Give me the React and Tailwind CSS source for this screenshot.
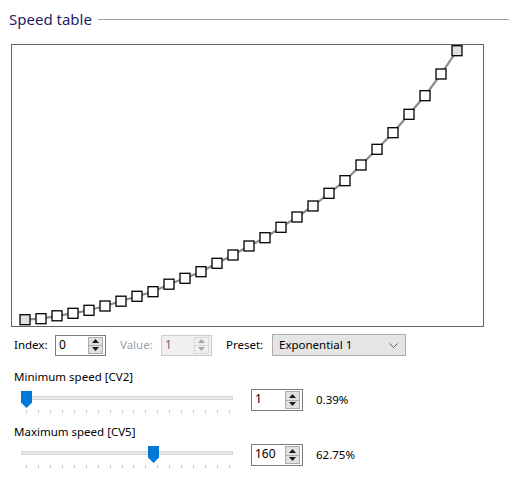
import React from 'react'

const ys = [
  319.7, 318.7, 315.8, 313.3, 310.3, 306, 301.2, 296.3, 291.7, 284.2, 278.3, 271.7, 263.3, 255,
  246, 237.7, 227.3, 217, 206, 193.3, 180.7, 165, 149.3, 132.7, 114.3, 95.7, 74, 50.7,
]

// chart content starts at (12, 45) in page coordinates
const points = ys.map((y, i) => [25 + i * 16 - 12, y - 45])

const SpeedChart = () => {
  const line = points.map(([x, y]) => `${x},${y}`).join(' ')
  return (
    <div className="ml-[11px] mt-[15px] w-[473px] h-[283px] border border-[#646464] bg-white">
      <svg width="471" height="281" viewBox="0 0 471 281">
        <polyline points={line} fill="none" stroke="#8c8c8c" strokeWidth="2.2" />
        {points.map(([x, y], i) => (
          <rect
            key={i}
            x={x - 5}
            y={y - 5}
            width="10"
            height="10"
            fill={i === 0 || i === points.length - 1 ? '#e0e0e0' : '#ffffff'}
            stroke="#000000"
            strokeWidth="1.3"
          />
        ))}
      </svg>
    </div>
  )
}

const SpinBox = ({ value, disabled, width = 'w-[52px]', height = 'h-[22px]' }) => {
  const arrow = disabled ? '#a8a8a8' : '#1a1a1a'
  return (
    <div
      className={`${width} ${height} flex items-stretch border ${
        disabled ? 'border-[#cccccc] bg-[#f0f0f0] text-[#6d6d6d]' : 'border-[#7a7a7a] bg-white text-black'
      }`}
    >
      <div className="flex-1 pl-[3px] text-[12px] leading-[18px]">{value}</div>
      <div className="w-[15px] my-[1px] mr-[2px] flex flex-col">
        <div
          className={`flex-1 flex items-center justify-center border ${
            disabled ? 'border-[#d9d9d9] bg-[#f0f0f0]' : 'border-[#adadad] bg-[#e1e1e1]'
          }`}
        >
          <svg width="7" height="4" viewBox="0 0 7 4">
            <path d="M0 4 L3.5 0 L7 4 Z" fill={arrow} />
          </svg>
        </div>
        <div
          className={`flex-1 flex items-center justify-center border border-t-0 ${
            disabled ? 'border-[#d9d9d9] bg-[#f0f0f0]' : 'border-[#adadad] bg-[#e1e1e1]'
          }`}
        >
          <svg width="7" height="4" viewBox="0 0 7 4">
            <path d="M0 0 L3.5 4 L7 0 Z" fill={arrow} />
          </svg>
        </div>
      </div>
    </div>
  )
}

const ticks = Array.from({ length: 18 }, (_, i) => 26 + (i * 203) / 17 - 19)

const Slider = ({ value }) => {
  const center = 26 + (value / 255) * 203 - 19
  return (
    <div className="relative w-[216px] h-[26px] ml-[19px]">
      <div className="absolute left-[2px] top-[7px] w-[212px] h-[4px] bg-[#e7e7e7] border border-[#d6d6d6]" />
      <svg
        className="absolute top-[2px]"
        style={{ left: center - 5.5 }}
        width="11"
        height="17"
        viewBox="0 0 11 17"
      >
        <path d="M0 0 H11 V11.5 L5.5 17 L0 11.5 Z" fill="#0078d7" />
      </svg>
      {ticks.map((x, i) => (
        <div key={i} className="absolute top-[21px] w-[1px] h-[3px] bg-[#c4c4c4]" style={{ left: Math.round(x) }} />
      ))}
    </div>
  )
}

const SpeedRow = ({ label, value, percent }) => (
  <div>
    <div className="ml-[14px] h-[16px] text-[11.5px] leading-[16px] text-black">{label}</div>
    <div className="flex items-start mt-[4px]">
      <Slider value={value} />
      <div className="ml-[16px]">
        <SpinBox value={value} />
      </div>
      <div className="ml-[13px] text-[11.5px] leading-[22px] text-black">{percent}</div>
    </div>
  </div>
)

export default function App() {
  return (
    <div
      className="w-[509px] h-[492px] bg-white overflow-hidden"
      style={{ fontFamily: '"Noto Sans", "Liberation Sans", sans-serif' }}
    >
      {/* Group header */}
      <div className="flex items-center h-[20px] mt-[9px] pl-[9px]">
        <span className="text-[15px] leading-[20px] text-[#1e1e64]">Speed table</span>
        <div className="flex-1 ml-[6px] h-[1px] bg-[#a0a0a0]" />
      </div>

      <SpeedChart />

      {/* Index / Value / Preset */}
      <div className="flex items-center h-[22px] mt-[7px]">
        <span className="ml-[14px] w-[41px] text-[11.5px] text-black">Index:</span>
        <SpinBox value="0" width="w-[51px]" height="h-[21px]" />
        <span className="ml-[14px] w-[41px] text-[11.5px] text-[#a0a0a0]">Value:</span>
        <SpinBox value="1" disabled width="w-[51px]" height="h-[21px]" />
        <span className="ml-[14px] w-[46px] text-[11.5px] text-black">Preset:</span>
        <div className="w-[134px] h-[22px] flex items-center justify-between border border-[#adadad] bg-[#e5e5e5] pl-[6px] pr-[7px]">
          <span className="text-[11.5px] text-black">Exponential 1</span>
          <svg width="9" height="5" viewBox="0 0 9 5">
            <path d="M0.5 0.5 L4.5 4.5 L8.5 0.5" fill="none" stroke="#606060" strokeWidth="1" />
          </svg>
        </div>
      </div>

      <div className="mt-[13px]">
        <SpeedRow label="Minimum speed [CV2]" value={1} percent="0.39%" />
      </div>
      <div className="mt-[9px]">
        <SpeedRow label="Maximum speed [CV5]" value={160} percent="62.75%" />
      </div>
    </div>
  )
}
